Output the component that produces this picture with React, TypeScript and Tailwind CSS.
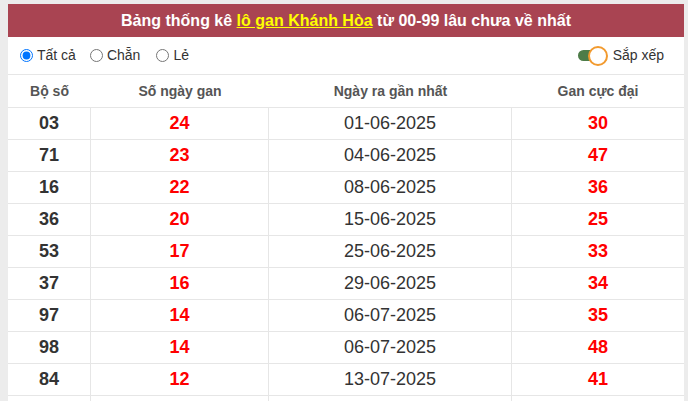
import { useState } from "react";

type Row = { so: string; days: number | null; last: string; max: number | null };

const rows: Row[] = [
  { so: "03", days: 24, last: "01-06-2025", max: 30 },
  { so: "71", days: 23, last: "04-06-2025", max: 47 },
  { so: "16", days: 22, last: "08-06-2025", max: 36 },
  { so: "36", days: 20, last: "15-06-2025", max: 25 },
  { so: "53", days: 17, last: "25-06-2025", max: 33 },
  { so: "37", days: 16, last: "29-06-2025", max: 34 },
  { so: "97", days: 14, last: "06-07-2025", max: 35 },
  { so: "98", days: 14, last: "06-07-2025", max: 48 },
  { so: "84", days: 12, last: "13-07-2025", max: 41 },
  // next row only peeks in at the bottom edge
  { so: "", days: null, last: "", max: null },
];

const filters = [
  { id: "all", label: "Tất cả" },
  { id: "even", label: "Chẵn" },
  { id: "odd", label: "Lẻ" },
];

export default function App() {
  const [filter, setFilter] = useState("all");
  const [sorted, setSorted] = useState(true);

  return (
    <div className="min-h-screen bg-[#ececec] pt-1 pl-2 pr-1 font-['Liberation_Sans',Arial,sans-serif] text-[#333]">
      <div className="bg-white">
        {/* title bar */}
        <div className="h-[33px] flex items-center justify-center bg-[#a94452] text-white font-bold text-[16px]">
          <span>
            Bảng thống kê{" "}
            <a href="#" className="text-[#ffff00] underline">
              lô gan Khánh Hòa
            </a>{" "}
            từ 00-99 lâu chưa về nhất
          </span>
        </div>

        {/* filters + sort toggle */}
        <div className="h-[38px] flex items-center justify-between pl-3 pr-5 border-b border-[#e6e6e6] text-[14px]">
          <div className="flex items-center">
            {filters.map((f, i) => (
              <label
                key={f.id}
                className={`flex items-center gap-[4px] ${i > 0 ? (i === 1 ? "ml-[14px]" : "ml-[16px]") : ""}`}
              >
                <input
                  type="radio"
                  name="filter"
                  checked={filter === f.id}
                  onChange={() => setFilter(f.id)}
                  className="m-0 w-[13px] h-[13px]"
                />
                <span>{f.label}</span>
              </label>
            ))}
          </div>
          <button
            type="button"
            onClick={() => setSorted((s) => !s)}
            className="flex items-center gap-[5px]"
          >
            <span className="relative w-[30px] h-[20px] flex items-center">
              <span className={`w-[22px] h-[11px] rounded-full ${sorted ? "bg-[#4d7c48]" : "bg-[#bbb]"}`} />
              <span
                className={`absolute top-0 w-[20px] h-[20px] rounded-full bg-white border-2 border-[#f29a2e] ${sorted ? "left-[10px]" : "left-0"}`}
              />
            </span>
            <span>Sắp xếp</span>
          </button>
        </div>

        {/* table header */}
        <div className="grid grid-cols-[83px_178px_243px_1fr] h-[33px] border-b border-[#e6e6e6] text-[14px] font-bold text-[#555]">
          <div className="flex items-center justify-center">Bộ số</div>
          <div className="flex items-center justify-center">Số ngày gan</div>
          <div className="flex items-center justify-center">Ngày ra gần nhất</div>
          <div className="flex items-center justify-center">Gan cực đại</div>
        </div>

        {rows.map((r, i) => (
          <div
            key={i}
            className="grid grid-cols-[83px_178px_243px_1fr] h-[32px] border-b border-[#e6e6e6] text-[18px]"
          >
            <div className="flex items-center justify-center border-r border-[#e6e6e6] font-bold">{r.so}</div>
            <div className="flex items-center justify-center border-r border-[#e6e6e6] font-bold text-[#ff0000]">
              {r.days}
            </div>
            <div className="flex items-center justify-center border-r border-[#e6e6e6]">{r.last}</div>
            <div className="flex items-center justify-center font-bold text-[#ff0000]">{r.max}</div>
          </div>
        ))}
      </div>
    </div>
  );
}
